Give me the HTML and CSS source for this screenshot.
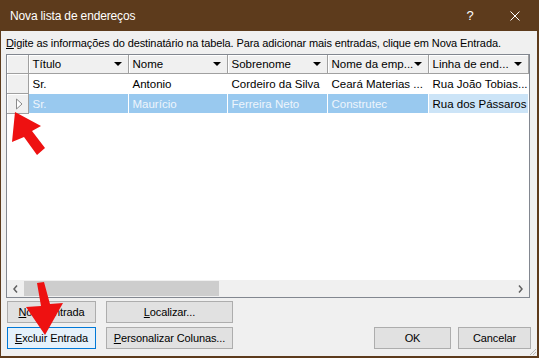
FILE: index.html
```html
<!DOCTYPE html>
<html lang="pt">
<head>
    <meta charset="UTF-8">
    <title>Nova lista de endereços</title>
    <link rel="stylesheet" href="styles.css">
</head>
<body>

<div class="window">
    <div class="titlebar">
        <span class="title">Nova lista de endereços</span>
        <span class="caption-btn help">?</span>
        <span class="caption-btn close">
            <svg width="10" height="10" viewBox="0 0 10 10"><path d="M0.5 0.5 L9.5 9.5 M9.5 0.5 L0.5 9.5" stroke="#fff" stroke-width="1"/></svg>
        </span>
    </div>

    <div class="content">
        <p class="hint"><u>D</u>igite as informações do destinatário na tabela. Para adicionar mais entradas, clique em Nova Entrada.</p>

        <div class="grid">
            <div class="grid-body">
                <table>
                    <colgroup>
                        <col class="c-row"><col class="c-100"><col class="c-99"><col class="c-100"><col class="c-101"><col class="c-100">
                    </colgroup>
                    <thead>
                        <tr>
                            <th class="corner"></th>
                            <th><div class="head"><span>Título</span><i class="drop"></i></div></th>
                            <th><div class="head"><span>Nome</span><i class="drop"></i></div></th>
                            <th><div class="head"><span>Sobrenome</span><i class="drop"></i></div></th>
                            <th><div class="head"><span>Nome da emp...</span><i class="drop"></i></div></th>
                            <th><div class="head"><span>Linha de end...</span><i class="drop"></i></div></th>
                        </tr>
                    </thead>
                    <tbody>
                        <tr>
                            <td class="rowhead"></td>
                            <td>Sr.</td>
                            <td>Antonio</td>
                            <td>Cordeiro da Silva</td>
                            <td>Ceará Materias ...</td>
                            <td>Rua João Tobias...</td>
                        </tr>
                        <tr class="selected">
                            <td class="rowhead">
                                <svg width="8" height="12" viewBox="0 0 8 12"><path d="M1.5 1 L7 6 L1.5 11 Z" fill="#fff" stroke="#8a8a8a" stroke-width="1"/></svg>
                            </td>
                            <td>Sr.</td>
                            <td>Maurício</td>
                            <td>Ferreira Neto</td>
                            <td>Construtec</td>
                            <td class="current">Rua dos Pássaros</td>
                        </tr>
                    </tbody>
                </table>
            </div>
            <div class="hscroll">
                <span class="sb-arrow">
                    <svg width="5" height="8" viewBox="0 0 5 8"><path d="M4 0.5 L1 4 L4 7.5" fill="none" stroke="#606060" stroke-width="1.5"/></svg>
                </span>
                <span class="track"><span class="thumb"></span></span>
                <span class="sb-arrow">
                    <svg width="5" height="8" viewBox="0 0 5 8"><path d="M1 0.5 L4 4 L1 7.5" fill="none" stroke="#606060" stroke-width="1.5"/></svg>
                </span>
            </div>
        </div>

        <div class="actions">
            <div class="left-buttons">
                <button class="btn"><u>N</u>ova Entrada</button>
                <button class="btn"><u>L</u>ocalizar...</button>
                <button class="btn focused"><u>E</u>xcluir Entrada</button>
                <button class="btn"><u>P</u>ersonalizar Colunas...</button>
            </div>
            <div class="right-buttons">
                <button class="btn ok">OK</button>
                <button class="btn cancel">Cancelar</button>
            </div>
        </div>

        <svg class="grip" width="8" height="8" viewBox="0 0 8 8">
            <path d="M7 1 L1 7 M7 4 L4 7" stroke="#b8b8b8" stroke-width="1"/>
        </svg>
    </div>

    <!-- setas vermelhas de anotação -->
    <svg class="marks" width="539" height="358" viewBox="0 0 539 358">
        <polygon points="15,112 41,126 32,131 45,148 37,155 24,137 12,142" fill="#ee1111"/>
        <polygon points="37,283 44,282 50,304 63,303 45,335 26,307 41,306" fill="#ee1111"/>
    </svg>
</div>

</body>
</html>
```

FILE: styles.css
```css
body {
    margin: 0;
    font-family: "Liberation Sans", Arial, sans-serif;
    font-size: 11px;
    color: #000;
}
.window {
    position: relative;
    width: 539px;
    height: 358px;
    box-sizing: border-box;
    background-color: #5d3b1c;
    padding: 0 2px 2px 1px;
    display: flex;
    flex-direction: column;
}
.titlebar {
    height: 31px;
    display: flex;
    align-items: center;
    color: white;
    font-size: 12px;
}
.title {
    flex: 1;
    padding-left: 9px;
    letter-spacing: -0.15px;
}
.caption-btn {
    width: 46px;
    height: 31px;
    display: flex;
    align-items: center;
    justify-content: center;
}
.help {
    font-size: 13px;
}
.close {
    width: 44px;
}
.content {
    position: relative;
    flex: 1;
    background-color: #f0f0f0;
    padding: 5px 7px 7px 5px;
    display: flex;
    flex-direction: column;
}
.hint {
    margin: 0;
    height: 15px;
    line-height: 15px;
    white-space: nowrap;
    letter-spacing: -0.1px;
}
.grid {
    margin-top: 3px;
    height: 244px;
    box-sizing: border-box;
    border: 1px solid #828790;
    display: flex;
    flex-direction: column;
}
.grid-body {
    flex: 1;
    background-color: white;
    overflow: hidden;
}
table {
    table-layout: fixed;
    border-collapse: collapse;
    width: 521px;
    font-size: 11.5px;
}
.c-row { width: 21px; }
.c-100 { width: 100px; }
.c-99 { width: 99px; }
.c-101 { width: 101px; }
th {
    height: 18px;
    padding: 0;
    background-color: #f0f0f0;
    border-right: 1px solid #a0a0a0;
    border-bottom: 1px solid #a0a0a0;
    box-shadow: inset 1px 1px 0 #fff;
    font-weight: normal;
    text-align: left;
}
.head {
    display: flex;
    align-items: center;
    justify-content: space-between;
    padding: 0 6px 0 4px;
}
.drop {
    width: 0;
    height: 0;
    border-left: 4px solid transparent;
    border-right: 4px solid transparent;
    border-top: 4px solid #000;
}
td {
    height: 19px;
    padding: 0 0 0 4px;
    border-right: 1px solid #fff;
    border-bottom: 1px solid #fff;
    white-space: nowrap;
    overflow: hidden;
}
td.rowhead {
    padding: 0;
    background-color: #f0f0f0;
    border-right: 1px solid #a0a0a0;
    border-bottom: 1px solid #a0a0a0;
    box-shadow: inset 1px 1px 0 #fff;
}
.rowhead svg {
    display: block;
    margin-left: 8px;
}
.selected td {
    background-color: #99c9ef;
    color: #eef5fc;
}
.selected td.current {
    background-color: #cce4f7;
    color: #000;
}
.selected td.rowhead {
    background-color: #f0f0f0;
}
.hscroll {
    height: 17px;
    display: flex;
    background-color: #f0f0f0;
}
.sb-arrow {
    width: 17px;
    display: flex;
    align-items: center;
    justify-content: center;
}
.track {
    flex: 1;
    display: flex;
}
.thumb {
    width: 195px;
    background-color: #cdcdcd;
    margin: 1px 0;
}
.actions {
    margin-top: 3px;
    display: flex;
    justify-content: space-between;
    align-items: flex-end;
}
.left-buttons {
    margin-left: 1px;
    display: grid;
    grid-template-columns: 89px 127px;
    gap: 4px 10px;
}
.right-buttons {
    display: flex;
    gap: 7px;
    margin-right: -1px;
}
.btn {
    height: 22px;
    padding: 0;
    font-family: inherit;
    font-size: 11px;
    letter-spacing: -0.1px;
    background-color: #e1e1e1;
    border: 1px solid #adadad;
    color: #000;
}
.btn.focused {
    background-color: #e5f1fb;
    border-color: #0078d7;
}
.btn.ok {
    width: 77px;
}
.btn.cancel {
    width: 73px;
}
.grip {
    position: absolute;
    right: 0;
    bottom: 0;
}
.marks {
    position: absolute;
    top: 0;
    left: 0;
    pointer-events: none;
}
```
